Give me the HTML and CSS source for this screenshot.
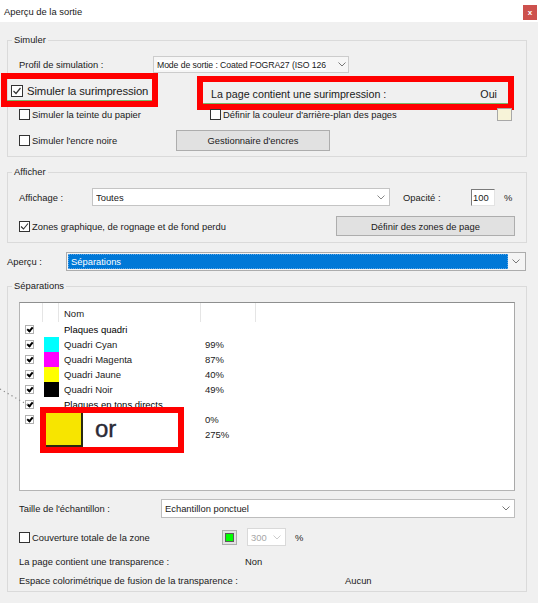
FILE: index.html
```html
<!DOCTYPE html>
<html lang="fr">
<head>
    <meta charset="UTF-8">
    <title>Aperçu de la sortie</title>
    <link rel="stylesheet" href="styles.css">
</head>
<body>
    <div class="titlebar">
        <span>Aperçu de la sortie</span>
        <span class="close">x</span>
    </div>

    <div class="dialog">
        <!-- Simuler -->
        <fieldset class="group group-simuler">
            <legend>Simuler</legend>
            <div class="row row-profile">
                <span class="lbl lbl-profile">Profil de simulation :</span>
                <div class="select select-profile">
                    <span class="sel-text">Mode de sortie : Coated FOGRA27 (ISO 126</span>
                    <span class="chev"><svg width="8" height="5" viewBox="0 0 8 5"><path d="M0.5 0.5 L4 4 L7.5 0.5" fill="none" stroke="#777"/></svg></span>
                </div>
            </div>
            <div class="row row-mark">
                <div class="mark mark-sim">
                    <span class="cb cb-big"><svg width="10" height="10" viewBox="0 0 10 10"><path d="M1.5 5 L4 7.5 L8.5 2" fill="none" stroke="#333" stroke-width="1.2"/></svg></span>
                    <span class="mark-text">Simuler la surimpression</span>
                </div>
                <div class="mark mark-page">
                    <span class="mark-text">La page contient une surimpression :</span>
                    <span class="val">Oui</span>
                </div>
            </div>
            <div class="row row-teinte">
                <label class="opt opt-teinte"><span class="cb"></span>Simuler la teinte du papier</label>
                <label class="opt"><span class="cb"></span>Définir la couleur d'arrière-plan des pages</label>
                <span class="swatch-bg"></span>
            </div>
            <div class="row row-encre">
                <label class="opt opt-encre"><span class="cb"></span>Simuler l'encre noire</label>
                <div class="btn btn-encres">Gestionnaire d'encres</div>
            </div>
        </fieldset>

        <!-- Afficher -->
        <fieldset class="group group-afficher">
            <legend>Afficher</legend>
            <div class="row row-affichage">
                <span class="lbl lbl-affichage">Affichage :</span>
                <div class="select select-affichage">
                    <span class="sel-text">Toutes</span>
                    <span class="chev"><svg width="8" height="5" viewBox="0 0 8 5"><path d="M0.5 0.5 L4 4 L7.5 0.5" fill="none" stroke="#888"/></svg></span>
                </div>
                <span class="lbl lbl-opacite">Opacité :</span>
                <div class="input-opacite">100</div>
                <span class="pct">%</span>
            </div>
            <div class="row row-zones">
                <label class="opt"><span class="cb"><svg width="9" height="9" viewBox="0 0 9 9"><path d="M1 4.5 L3.5 7 L8 1.5" fill="none" stroke="#333" stroke-width="1.1"/></svg></span>Zones graphique, de rognage et de fond perdu</label>
                <div class="btn btn-zones">Définir des zones de page</div>
            </div>
        </fieldset>

        <div class="row row-apercu">
            <span class="lbl lbl-apercu">Aperçu :</span>
            <div class="select select-apercu">
                <span class="sel-blue">Séparations</span>
                <span class="chev"><svg width="8" height="5" viewBox="0 0 8 5"><path d="M0.5 0.5 L4 4 L7.5 0.5" fill="none" stroke="#777"/></svg></span>
            </div>
        </div>

        <!-- Séparations -->
        <fieldset class="group group-sep">
            <legend>Séparations</legend>
            <div class="list">
                <div class="list-head">
                    <span></span>
                    <span></span>
                    <span class="name">Nom</span>
                    <span></span>
                    <span class="last"></span>
                </div>
                <div class="list-row heading">
                    <span class="c-cb"><span class="lcb"></span></span>
                    <span></span>
                    <span class="name">Plaques quadri</span>
                    <span></span>
                </div>
                <div class="list-row">
                    <span class="c-cb"><span class="lcb"></span></span>
                    <span class="sw sw-cyan"></span>
                    <span class="name">Quadri Cyan</span>
                    <span class="pc">99%</span>
                </div>
                <div class="list-row">
                    <span class="c-cb"><span class="lcb"></span></span>
                    <span class="sw sw-magenta"></span>
                    <span class="name">Quadri Magenta</span>
                    <span class="pc">87%</span>
                </div>
                <div class="list-row">
                    <span class="c-cb"><span class="lcb"></span></span>
                    <span class="sw sw-yellow"></span>
                    <span class="name">Quadri Jaune</span>
                    <span class="pc">40%</span>
                </div>
                <div class="list-row">
                    <span class="c-cb"><span class="lcb"></span></span>
                    <span class="sw sw-black"></span>
                    <span class="name">Quadri Noir</span>
                    <span class="pc">49%</span>
                </div>
                <div class="list-row heading">
                    <span class="c-cb"><span class="lcb"></span></span>
                    <span></span>
                    <span class="name">Plaques en tons directs</span>
                    <span></span>
                </div>
                <div class="list-row">
                    <span class="c-cb"><span class="lcb"></span></span>
                    <span class="sw sw-gold"></span>
                    <span class="name">Or</span>
                    <span class="pc">0%</span>
                </div>
                <div class="list-row">
                    <span></span>
                    <span></span>
                    <span class="name"></span>
                    <span class="pc">275%</span>
                </div>

                <div class="callout">
                    <span class="callout-sw"></span>
                    <span class="callout-text">or</span>
                </div>
            </div>

            <div class="row row-taille">
                <span class="lbl lbl-taille">Taille de l'échantillon :</span>
                <div class="select select-taille">
                    <span class="sel-text">Echantillon ponctuel</span>
                    <span class="chev"><svg width="8" height="5" viewBox="0 0 8 5"><path d="M0.5 0.5 L4 4 L7.5 0.5" fill="none" stroke="#777"/></svg></span>
                </div>
            </div>
            <div class="row row-couv">
                <label class="opt opt-couv"><span class="cb"></span>Couverture totale de la zone</label>
                <span class="swatch-green"><span></span></span>
                <div class="select select-off">
                    <span class="sel-text">300</span>
                    <span class="chev"><svg width="8" height="5" viewBox="0 0 8 5"><path d="M0.5 0.5 L4 4 L7.5 0.5" fill="none" stroke="#ccc"/></svg></span>
                </div>
                <span class="pct">%</span>
            </div>
            <div class="row row-info">
                <span class="lbl lbl-transp">La page contient une transparence :</span>
                <span>Non</span>
            </div>
            <div class="row row-info row-espace">
                <span class="lbl lbl-espace">Espace colorimétrique de fusion de la transparence :</span>
                <span>Aucun</span>
            </div>
        </fieldset>
    </div>

    <svg class="pointer-dots" width="32" height="24" viewBox="0 0 32 24">
        <path d="M0 2 L28 18" fill="none" stroke="#8a8a8a" stroke-width="1.2" stroke-dasharray="1.2 3.2"/>
    </svg>
</body>
</html>
```

FILE: styles.css
```css
* {
    box-sizing: border-box;
}
body {
    margin: 0;
    width: 538px;
    height: 603px;
    background-color: #f0f0f0;
    font-family: 'Liberation Sans', Arial, sans-serif;
    font-size: 9.4px;
    color: #1a1a1a;
    position: relative;
    overflow: hidden;
}
.titlebar {
    height: 22px;
    background-color: #ffffff;
    display: flex;
    align-items: center;
    padding-left: 4px;
}
.close {
    margin-left: auto;
    margin-right: 1px;
    align-self: flex-start;
    margin-top: 5px;
    width: 14px;
    height: 15px;
    background-color: #cd514d;
    color: #ffffff;
    font-size: 8px;
    font-weight: bold;
    display: flex;
    align-items: center;
    justify-content: center;
}
.dialog {
    padding: 0 11px 0 7px;
}
.group {
    margin: 0;
    padding: 0 11px 5px;
    border: 1px solid #dadada;
    min-width: 0;
}
.group legend {
    padding: 0 2px;
    margin-left: -7px;
    line-height: 12px;
}
.group-simuler {
    margin-top: 12px;
}
.group-afficher {
    margin-top: 9px;
    padding-bottom: 6px;
}
.group-sep {
    margin-top: 9px;
}
.row {
    display: flex;
    align-items: center;
}
.lbl {
    flex-shrink: 0;
}
.opt {
    display: flex;
    align-items: center;
    gap: 2px;
    flex-shrink: 0;
}
.cb {
    width: 11px;
    height: 11px;
    border: 1px solid #333333;
    background-color: #ffffff;
    display: inline-flex;
    align-items: center;
    justify-content: center;
    flex-shrink: 0;
}
.cb-big {
    width: 12px;
    height: 12px;
}
.select {
    display: flex;
    align-items: center;
    border: 1px solid #c4c4c4;
    background-color: #ffffff;
    padding-left: 3px;
    flex-shrink: 0;
}
.sel-text {
    white-space: nowrap;
    overflow: hidden;
}
.chev {
    margin-left: auto;
    width: 16px;
    height: 100%;
    display: flex;
    align-items: center;
    justify-content: center;
    flex-shrink: 0;
}
.btn {
    border: 1px solid #adadad;
    background-color: #e1e1e1;
    display: flex;
    align-items: center;
    justify-content: center;
    flex-shrink: 0;
}
.pct {
    margin-left: 9px;
}

/* Simuler */
.row-profile {
    margin-top: 10px;
    height: 17px;
}
.lbl-profile {
    width: 134px;
}
.select-profile {
    width: 196px;
    height: 17px;
    background-color: #f6f6f6;
    border-color: #cccccc;
    font-size: 8.7px;
    letter-spacing: -0.1px;
}
.select-profile .sel-text {
    background-color: #ffffff;
}
.select-profile .chev {
    width: 13px;
}
.row-mark {
    height: 35px;
    align-items: flex-start;
}
.mark {
    border: 6px solid #ff0000;
    height: 34px;
    display: flex;
    align-items: center;
    box-shadow: inset 0 -1px 0 #78b86a;
    flex-shrink: 0;
    white-space: nowrap;
}
.mark-sim {
    margin-left: -18px;
    width: 157px;
    padding: 2px 0 0 4px;
    gap: 4px;
    font-size: 11.3px;
    letter-spacing: -0.1px;
}
.mark-page {
    margin-left: 39px;
    margin-top: 3px;
    width: 317px;
    padding: 1px 11px 0 8px;
    font-size: 10.7px;
}
.mark-page .val {
    margin-left: auto;
}
.row-teinte {
    height: 13px;
}
.opt-teinte {
    width: 191px;
}
.swatch-bg {
    margin-left: auto;
    margin-right: 3px;
    width: 15px;
    height: 13px;
    border: 1px solid #a8a8a8;
    background-color: #f7f3d8;
}
.row-encre {
    margin-top: 9px;
    height: 21px;
}
.opt-encre {
    width: 157px;
}
.btn-encres {
    width: 154px;
    height: 21px;
}

/* Afficher */
.row-affichage {
    margin-top: 10px;
    height: 18px;
}
.lbl-affichage {
    width: 73px;
}
.select-affichage {
    width: 298px;
    height: 18px;
}
.lbl-opacite {
    margin-left: 13px;
    width: 68px;
}
.input-opacite {
    width: 24px;
    height: 17px;
    background-color: #ffffff;
    border: 1px solid #e3e3e3;
    border-top-color: #7a7a7a;
    border-left-color: #7a7a7a;
    padding: 2px 0 0 1px;
}
.row-zones {
    margin-top: 10px;
    height: 20px;
}
.btn-zones {
    margin-left: auto;
    width: 179px;
    height: 20px;
}

/* Aperçu */
.row-apercu {
    margin-top: 9px;
    height: 19px;
}
.lbl-apercu {
    width: 59px;
}
.select-apercu {
    width: 460px;
    height: 19px;
    padding: 1px;
    border-color: #acacac;
    background-color: #f4f4f4;
}
.sel-blue {
    flex: 1;
    height: 100%;
    background-color: #0078d7;
    color: #ffffff;
    padding-left: 2px;
    display: flex;
    align-items: center;
    border: 1px dotted #5aa5e6;
}

/* Séparations */
.list {
    position: relative;
    margin-top: 10px;
    height: 189px;
    background-color: #ffffff;
    border: 1px solid #b4b4b4;
    border-top-color: #8e8f8f;
    border-right-color: #a9a9a9;
    font-size: 9.5px;
}
.list-head,
.list-row {
    display: grid;
    grid-template-columns: 23px 16px 142px 55px 1fr;
}
.list-head {
    height: 19px;
}
.list-head span {
    border-right: 1px solid #e5e5e5;
    display: flex;
    align-items: center;
}
.list-head .last {
    border-right: none;
}
.list-head .name {
    padding-left: 5px;
    padding-top: 1px;
}
.list-row {
    height: 15px;
    align-items: center;
}
.list-row .name {
    padding-left: 5px;
    white-space: nowrap;
}
.list-row.heading .name {
    color: #000000;
}
.list-row .pc {
    padding-left: 4px;
}
.c-cb {
    padding-left: 5px;
    display: flex;
}
.lcb {
    width: 9px;
    height: 9px;
    border: 1px solid #b0b0b0;
    background-color: #ffffff;
    position: relative;
}
.lcb::after {
    content: '';
    position: absolute;
    left: 2px;
    top: 0;
    width: 2px;
    height: 4px;
    border-right: 2px solid #000000;
    border-bottom: 2px solid #000000;
    transform: rotate(40deg);
}
.sw {
    width: 15px;
    height: 15px;
    margin-left: 1px;
}
.sw-cyan { background-color: #00ffff; }
.sw-magenta { background-color: #ff00ff; }
.sw-yellow { background-color: #ffff00; }
.sw-black { background-color: #000000; }
.sw-gold { background-color: #f5e400; }
.callout {
    position: absolute;
    left: 20px;
    top: 104px;
    width: 144px;
    height: 46px;
    border: 6px solid #ff0000;
    background-color: #ffffff;
    display: flex;
    align-items: flex-start;
}
.callout-sw {
    width: 37px;
    height: 34px;
    background-color: #f7e500;
    border-right: 2px solid #2a2a10;
    border-bottom: 2px solid #2a2a10;
}
.callout-text {
    margin-left: 12px;
    margin-top: 2px;
    font-size: 24px;
    line-height: 28px;
    color: #2a2a36;
    -webkit-text-stroke: 0.4px #2a2a36;
}
.row-taille {
    margin-top: 8px;
    height: 19px;
}
.lbl-taille {
    width: 142px;
}
.select-taille {
    width: 354px;
    height: 19px;
    border-color: #bdbdbd;
}
.row-couv {
    margin-top: 10px;
    height: 18px;
}
.opt-couv {
    width: 203px;
}
.swatch-green {
    width: 15px;
    height: 15px;
    border: 1px solid #adadad;
    background-color: #e1e1e1;
    padding: 2px;
    display: flex;
}
.swatch-green span {
    flex: 1;
    background-color: #00ff00;
    border: 1px solid #5a5a5a;
}
.select-off {
    margin-left: 10px;
    width: 39px;
    height: 18px;
    border-color: #d9d9d9;
    color: #a6a6a6;
}
.row-info {
    margin-top: 9px;
    height: 12px;
}
.row-espace {
    margin-top: 7px;
}
.lbl-transp {
    width: 226px;
}
.lbl-espace {
    width: 326px;
}
.pointer-dots {
    position: absolute;
    left: 0;
    top: 387px;
}
```
